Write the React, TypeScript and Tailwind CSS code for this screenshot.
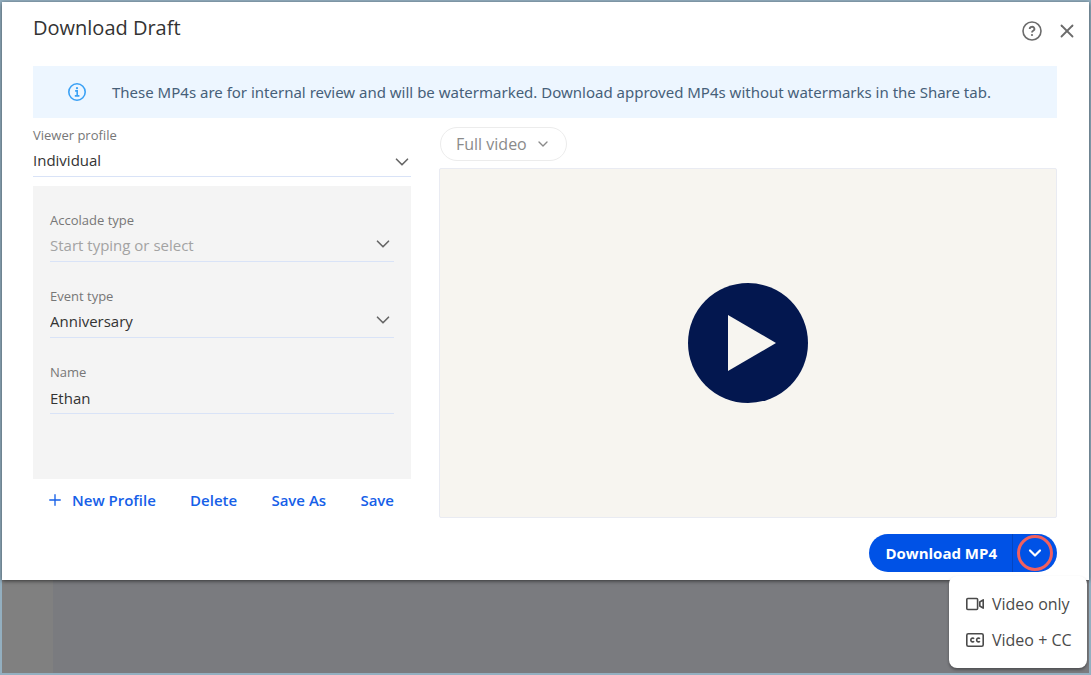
import { useState } from 'react';
import type { ReactNode } from 'react';
import { ChevronDown, Plus, X } from 'lucide-react';

interface SelectFieldProps {
  id: string;
  label: string;
  options: string[];
  placeholder?: string;
  chevronClass?: string;
}

function SelectField({ id, label, options, placeholder, chevronClass = 'right-0 bottom-[6px]' }: SelectFieldProps) {
  const [value, setValue] = useState(placeholder ? '' : options[0]);

  return (
    <div className="relative border-b border-[#d9e3f7]">
      <label htmlFor={id} className="block text-[13px] leading-5 text-[#777]">
        {label}
      </label>
      <select
        id={id}
        value={value}
        onChange={(e) => setValue(e.target.value)}
        className={`block h-[31px] w-full appearance-none bg-transparent text-[15px] outline-none ${value ? 'text-[#333]' : 'text-[#a3a3a3]'}`}
      >
        {placeholder && <option value="">{placeholder}</option>}
        {options.map((option) => (
          <option key={option}>{option}</option>
        ))}
      </select>
      <ChevronDown className={`pointer-events-none absolute size-[22px] text-[#666] ${chevronClass}`} strokeWidth={1.8} />
    </div>
  );
}

function TextButton({ children }: { children: ReactNode }) {
  return <button className="flex items-center gap-2 text-[15px] leading-5 font-semibold text-[#1660e8]">{children}</button>;
}

function HelpIcon() {
  return (
    <svg viewBox="0 0 20 20" className="size-5" fill="none" stroke="#6b6b6b" strokeWidth="1.6">
      <circle cx="10" cy="10" r="9" />
      <path d="M7.7 7.9a2.35 2.1 0 1 1 3.5 1.8c-.8.5-1.2.8-1.2 1.7" strokeWidth="1.8" />
      <circle cx="10" cy="14" r="1.1" fill="#6b6b6b" stroke="none" />
    </svg>
  );
}

function InfoIcon() {
  return (
    <svg viewBox="0 0 18 18" className="size-[18px]" fill="none" stroke="#3ba1f5" strokeWidth="1.6">
      <circle cx="9" cy="9" r="8.2" />
      <path d="M7.1 7.9h2.1v5M6.8 12.9h4.6" />
      <circle cx="9" cy="5.2" r="1.1" fill="#3ba1f5" stroke="none" />
    </svg>
  );
}

function VideoIcon() {
  return (
    <svg viewBox="0 0 18 14" className="h-[14px] w-[18px]" fill="none" stroke="#4a4a4a" strokeWidth="1.6">
      <rect x=".8" y="1.5" width="10.8" height="11" rx="1" />
      <path d="M17.2 2.8v8.4l-3.4-2.2V5z" strokeLinejoin="round" />
    </svg>
  );
}

function CaptionsIcon() {
  return (
    <svg viewBox="0 0 18 14" className="h-[14px] w-[18px]" fill="none" stroke="#4a4a4a" strokeWidth="1.6">
      <rect x=".8" y=".8" width="16.4" height="12.4" rx="1.5" />
      <path d="M8.1 5.7a1.9 1.9 0 1 0 0 2.6M13.9 5.7a1.9 1.9 0 1 0 0 2.6" />
    </svg>
  );
}

export default function App() {
  return (
    <div className="flex min-h-screen flex-col border-2 border-[#93afc0] bg-[linear-gradient(to_right,#808080_51px,#7a7b7f_51px)] font-['Open_Sans',sans-serif]">
      <main className="bg-white pr-8 pb-2 pl-[31px] shadow-[0_1px_4px_rgba(0,0,0,0.6)]">
        <header className="flex h-16 justify-between pt-3">
          <h1 className="text-xl leading-7 text-[#333]">Download Draft</h1>
          <div className="-mr-[21px] flex h-8 items-center gap-[14px] pt-0.5 text-[#6b6b6b]">
            <button aria-label="Help">
              <HelpIcon />
            </button>
            <button aria-label="Close">
              <X className="size-[22px]" strokeWidth={2} />
            </button>
          </div>
        </header>

        <div className="flex h-[52px] items-center gap-[26px] bg-[#edf6ff] px-[35px]">
          <InfoIcon />
          <p className="font-['Noto_Sans',sans-serif] text-[15px] text-[#466079]">
            These MP4s are for internal review and will be watermarked. Download approved MP4s without watermarks in the Share tab.
          </p>
        </div>

        <div className="flex gap-7">
          <section className="w-[378px] shrink-0 pt-[7px]">
            <SelectField id="profile" label="Viewer profile" options={['Individual']} chevronClass="-right-[2px] bottom-[3px]" />
            <div className="mt-[9px] flex h-[293px] flex-col gap-6 bg-[#f4f4f4] px-[17px] pt-6">
              <SelectField id="accolade" label="Accolade type" placeholder="Start typing or select" options={['Service', 'Recognition']} />
              <SelectField id="event" label="Event type" options={['Anniversary', 'Birthday']} />
              <div className="border-b border-[#d9e3f7]">
                <label htmlFor="name" className="block text-[13px] leading-5 text-[#777]">
                  Name
                </label>
                <input id="name" defaultValue="Ethan" className="block h-[31px] w-full bg-transparent text-[15px] text-[#333] outline-none" />
              </div>
            </div>
            <div className="mt-[11px] flex justify-between px-[17px]">
              <TextButton>
                <Plus className="-ml-1 size-[18px]" strokeWidth={1.8} />
                New Profile
              </TextButton>
              <TextButton>Delete</TextButton>
              <TextButton>Save As</TextButton>
              <TextButton>Save</TextButton>
            </div>
          </section>

          <section className="flex flex-1 flex-col items-start pt-[9px]">
            <button className="ml-px flex h-[34px] items-center gap-2 rounded-full border border-[#ececec] px-[15px] text-base text-[#8a8a8a]">
              Full video
              <ChevronDown className="size-4" />
            </button>
            <div className="mt-[7px] flex h-[350px] w-full items-center justify-center rounded-xs border border-[#e9ebf2] bg-[#f7f5f0]">
              <button aria-label="Play">
                <svg viewBox="0 0 120 120" className="size-[120px]">
                  <circle cx="60" cy="60" r="60" fill="#03174f" />
                  <path d="M40 32v56l48-28z" fill="#f7f5f0" />
                </svg>
              </button>
            </div>
            <div className="relative mt-4 flex h-[38px] self-end rounded-full bg-[#0052e6] text-white">
              <button className="pr-[15px] pl-4 text-[15px] font-bold">Download MP4</button>
              <button aria-label="More download options" className="flex items-center border-l border-[#0345c0] px-1">
                <span className="flex size-9 items-center justify-center rounded-full border-3 border-[#f0605f]">
                  <ChevronDown className="size-5" strokeWidth={2.6} />
                </span>
              </button>
              <div className="absolute top-full -right-[30px] mt-1 flex w-[138px] flex-col gap-3 rounded-lg bg-white py-4 pl-[17px] text-base text-[#4a4a4a] shadow-[0_2px_3px_rgba(0,0,0,0.35)]">
                <button className="flex items-center gap-2 whitespace-nowrap">
                  <VideoIcon />
                  Video only
                </button>
                <button className="flex items-center gap-2 whitespace-nowrap">
                  <CaptionsIcon />
                  Video + CC
                </button>
              </div>
            </div>
          </section>
        </div>
      </main>
    </div>
  );
}
